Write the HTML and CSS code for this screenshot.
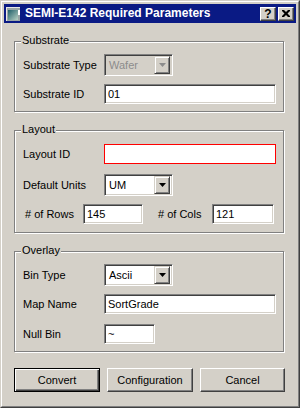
FILE: index.html
```html
<!DOCTYPE html>
<html lang="en">

<head>
    <meta charset="UTF-8">
    <meta name="viewport" content="width=device-width, initial-scale=1.0">
    <title>SEMI-E142 Required Parameters</title>
    <link rel="stylesheet" href="styles.css">
</head>

<body>
    <div class="window">
        <div class="frame">
            <div class="titlebar">
                <svg class="app-icon" width="14" height="14" viewBox="0 0 14 14">
                    <defs>
                        <linearGradient id="ico" x1="0" y1="0" x2="1" y2="1">
                            <stop offset="0" stop-color="#1f5f6a" />
                            <stop offset="1" stop-color="#b9d2c4" />
                        </linearGradient>
                    </defs>
                    <rect x="0" y="0" width="14" height="14" fill="#e8e8e8" />
                    <rect x="1" y="1" width="13" height="13" fill="#9aa6a6" />
                    <rect x="2" y="3" width="10" height="10" fill="url(#ico)" />
                    <rect x="12" y="3" width="2" height="5" fill="#ffffff" />
                </svg>
                <span class="title">SEMI-E142 Required Parameters</span>
                <div class="caption-buttons">
                    <span class="cap-btn help">?</span>
                    <span class="cap-btn">
                        <svg width="8" height="7" viewBox="0 0 8 7">
                            <path d="M0 0h2l2 2 2-2h2v1l-2.5 2.5L8 6v1H6L4 5 2 7H0V6l2.5-2.5L0 1z" fill="#000" />
                        </svg>
                    </span>
                </div>
            </div>

            <div class="content">
                <!-- Substrate -->
                <section class="group group-substrate">
                    <span class="group-title">Substrate</span>
                    <div class="row">
                        <span class="label">Substrate Type</span>
                        <div class="combo disabled">
                            <span class="combo-value">Wafer</span>
                            <span class="combo-btn">
                                <svg width="7" height="4" viewBox="0 0 7 4"><path d="M0 0h7L3.5 4z" /></svg>
                            </span>
                        </div>
                    </div>
                    <div class="row gap-8">
                        <span class="label">Substrate ID</span>
                        <div class="field wide">01</div>
                    </div>
                </section>

                <!-- Layout -->
                <section class="group group-layout">
                    <span class="group-title">Layout</span>
                    <div class="row">
                        <span class="label">Layout ID</span>
                        <div class="field wide invalid"></div>
                    </div>
                    <div class="row gap-10">
                        <span class="label">Default Units</span>
                        <div class="combo">
                            <span class="combo-value">UM</span>
                            <span class="combo-btn">
                                <svg width="7" height="4" viewBox="0 0 7 4"><path d="M0 0h7L3.5 4z" /></svg>
                            </span>
                        </div>
                    </div>
                    <div class="row split gap-8">
                        <span class="label rows-label"># of Rows</span>
                        <div class="field rows-field">145</div>
                        <span class="label cols-label"># of Cols</span>
                        <div class="field cols-field">121</div>
                    </div>
                </section>

                <!-- Overlay -->
                <section class="group group-overlay">
                    <span class="group-title">Overlay</span>
                    <div class="row">
                        <span class="label">Bin Type</span>
                        <div class="combo">
                            <span class="combo-value">Ascii</span>
                            <span class="combo-btn">
                                <svg width="7" height="4" viewBox="0 0 7 4"><path d="M0 0h7L3.5 4z" /></svg>
                            </span>
                        </div>
                    </div>
                    <div class="row gap-8">
                        <span class="label">Map Name</span>
                        <div class="field wide">SortGrade</div>
                    </div>
                    <div class="row gap-10">
                        <span class="label">Null Bin</span>
                        <div class="field short">~</div>
                    </div>
                </section>

                <div class="actions">
                    <button class="btn default">Convert</button>
                    <button class="btn">Configuration</button>
                    <button class="btn">Cancel</button>
                </div>
            </div>
        </div>
    </div>
</body>

</html>
```

FILE: styles.css
```css
/* General Reset */
* {
    margin: 0;
    padding: 0;
    box-sizing: border-box;
}

body {
    font-family: 'Liberation Sans', Arial, sans-serif;
    font-size: 11px;
    color: #000;
    background: #d4d0c8;
}

/* Window frame */
.window {
    width: 300px;
    height: 408px;
    background: #d4d0c8;
    border: 1px solid;
    border-color: #d4d0c8 #404040 #404040 #d4d0c8;
}

.frame {
    height: 100%;
    border: 1px solid;
    border-color: #ffffff #808080 #808080 #ffffff;
    padding: 2px;
}

.titlebar {
    height: 19px;
    background: #0a1a84;
    display: flex;
    align-items: center;
    padding: 0 2px;
}

.app-icon {
    display: block;
    margin-right: 5px;
}

.title {
    flex: 1;
    color: #fff;
    font-weight: bold;
    font-size: 12px;
    line-height: 19px;
}

.caption-buttons {
    display: flex;
    gap: 2px;
}

.cap-btn {
    width: 16px;
    height: 14px;
    background: #d4d0c8;
    border: 1px solid;
    border-color: #ffffff #404040 #404040 #ffffff;
    box-shadow: inset -1px -1px 0 #808080;
    display: flex;
    align-items: center;
    justify-content: center;
}

.cap-btn.help {
    font-weight: bold;
    font-size: 12px;
    line-height: 12px;
}

/* Content */
.content {
    padding: 0 12px 0 10px;
}

.group {
    position: relative;
    border: 1px solid #808080;
    box-shadow: 1px 1px 0 #ffffff, inset 1px 1px 0 #ffffff;
    padding: 12px 8px 7px 8px;
    margin-top: 18px;
}

.group-layout {
    padding: 13px 8px 8px 8px;
}

.group-overlay {
    padding-bottom: 7px;
}

.group-title {
    position: absolute;
    top: -8px;
    left: 6px;
    padding: 0 1px;
    line-height: 13px;
    background: #d4d0c8;
}

.row {
    display: grid;
    grid-template-columns: 81px auto;
    align-items: center;
    justify-items: start;
}

.gap-8 {
    margin-top: 8px;
}

.gap-10 {
    margin-top: 10px;
}

.label {
    line-height: 13px;
}

/* Sunken edit box */
.field {
    height: 20px;
    background: #fff;
    border: 1px solid;
    border-color: #808080 #ffffff #ffffff #808080;
    box-shadow: inset 1px 1px 0 #404040, inset -1px -1px 0 #d4d0c8;
    padding: 0 3px;
    line-height: 18px;
}

.field.wide {
    width: 172px;
}

.field.short {
    width: 51px;
}

.field.invalid {
    border: 1px solid #ff0000;
    box-shadow: none;
}

.row.split {
    display: flex;
}

.rows-label {
    width: 60px;
    padding-left: 2px;
}

.rows-field {
    width: 60px;
}

.cols-label {
    width: 54px;
    margin-left: 15px;
}

.cols-field {
    width: 62px;
}

/* Combo box */
.combo {
    width: 69px;
    height: 22px;
    background: #fff;
    border: 1px solid;
    border-color: #808080 #ffffff #ffffff #808080;
    box-shadow: inset 1px 1px 0 #404040, inset -1px -1px 0 #d4d0c8;
    padding: 2px;
    display: flex;
    align-items: center;
}

.combo-value {
    flex: 1;
    padding-left: 2px;
    line-height: 16px;
}

.combo-btn {
    width: 16px;
    height: 18px;
    background: #d4d0c8;
    border: 1px solid;
    border-color: #d4d0c8 #404040 #404040 #d4d0c8;
    box-shadow: inset 1px 1px 0 #ffffff, inset -1px -1px 0 #808080;
    display: flex;
    align-items: center;
    justify-content: center;
}

.combo-btn svg {
    fill: #000;
}

.combo.disabled {
    background: #d4d0c8;
}

.combo.disabled .combo-value {
    color: #8c8c8c;
}

.combo.disabled .combo-btn svg {
    fill: #8c8c8c;
}

/* Buttons */
.actions {
    display: grid;
    grid-template-columns: 86px 86px 85px;
    gap: 7px;
    width: 271px;
    margin-top: 16px;
}

.btn {
    height: 24px;
    font-family: inherit;
    font-size: 11px;
    color: #000;
    background: #d4d0c8;
    border: 1px solid;
    border-color: #ffffff #404040 #404040 #ffffff;
    box-shadow: inset -1px -1px 0 #808080;
}

.btn.default {
    border: 1px solid #000;
    box-shadow: inset 1px 1px 0 #ffffff, inset -1px -1px 0 #404040, inset -2px -2px 0 #808080;
}
```
